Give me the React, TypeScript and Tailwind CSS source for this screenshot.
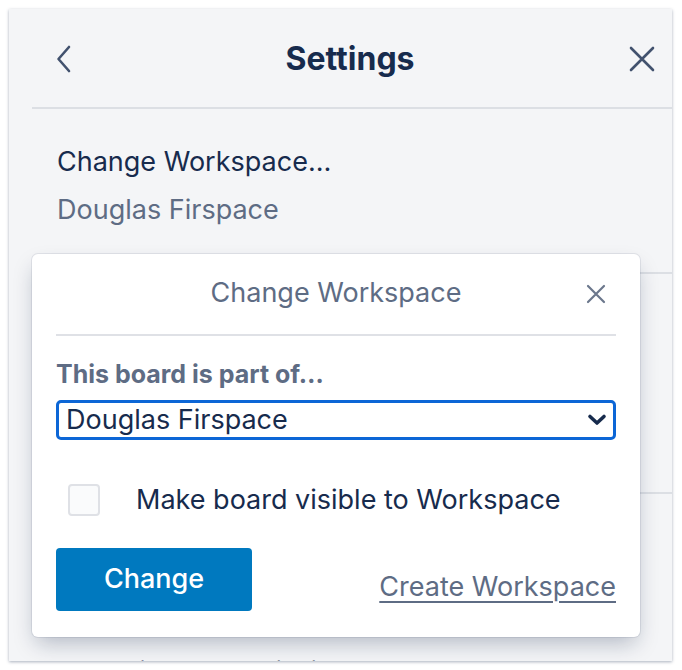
import { X } from 'lucide-react';

const font = { fontFamily: 'Inter, "Noto Sans", sans-serif' };

function SettingsPanel() {
  return (
    <div className="relative ml-[9px] mt-[9px] h-[652px] w-[663px] overflow-hidden bg-[#f4f5f7] shadow-[0_1px_3px_rgba(9,30,66,0.35)]">
      <div className="pl-[23px]">
        {/* Header */}
        <div className="flex h-[100px] items-center border-b-2 border-[#dcdfe4] pl-[24px] pr-[17px] pt-[2px] text-[#42526e]">
          <svg width="15" height="28" viewBox="0 0 15 28" fill="none">
            <path d="M13 2 L2.5 14 L13 26" stroke="currentColor" strokeWidth="2.6" strokeLinecap="round" strokeLinejoin="round" />
          </svg>
          <h1 className="flex-1 text-center text-[32px] font-bold leading-[40px] text-[#172b4d]">Settings</h1>
          <svg width="26" height="26" viewBox="0 0 26 26" fill="none">
            <path d="M2 2 L24 24 M24 2 L2 24" stroke="currentColor" strokeWidth="2.6" strokeLinecap="round" />
          </svg>
        </div>

        {/* Rows */}
        <div className="h-[163px] pl-[25px] pt-[37px]">
          <p className="text-[27px] leading-[32px] text-[#172b4d]">Change Workspace…</p>
          <p className="mt-[16px] text-[27px] leading-[32px] text-[#5e6c84]">Douglas Firspace</p>
        </div>
        <div className="h-[2px] bg-[#dcdfe4]" />
        <div className="h-[218px] pl-[25px] pt-[30px]">
          <p className="text-[27px] text-[#172b4d]">Change permissions…</p>
        </div>
        <div className="h-[2px] bg-[#dcdfe4]" />
        <div className="pl-[25px] pt-[30px]">
          <p className="text-[27px] leading-[32px] text-[#172b4d]">Cover images</p>
          <p className="mt-[100px] text-[27px] leading-[32px] text-[#172b4d]">Add sticker permissions</p>
        </div>
      </div>

      {/* Popover */}
      <div className="absolute left-[23px] top-[245px] w-[608px] rounded-[6px] bg-white px-[24px] pb-[26px] shadow-[0_10px_22px_-4px_rgba(9,30,66,0.28),0_0_0_1px_rgba(9,30,66,0.08)]">
        <div className="relative flex h-[82px] items-center justify-center border-b-2 border-[#dfe1e6] pb-[2px]">
          <span className="text-[27px] leading-[34px] text-[#5e6c84]">Change Workspace</span>
          <X className="hidden" />
          <svg width="20" height="20" viewBox="0 0 20 20" fill="none" className="absolute right-[10px] top-[30px] text-[#6b778c]">
            <path d="M2 2 L18 18 M18 2 L2 18" stroke="currentColor" strokeWidth="2.2" strokeLinecap="round" />
          </svg>
        </div>
        <p className="mt-[23px] text-[25px] font-bold leading-[30px] text-[#5e6c84]">This board is part of…</p>
        <div className="mt-[11px] flex h-[40px] items-center rounded-[5px] border-[3px] border-[#0c66d6] pl-[7px] pr-[6px]">
          <span className="flex-1 text-[27px] leading-[32px] text-[#172b4d]">Douglas Firspace</span>
          <svg width="20" height="14" viewBox="0 0 20 14" className="text-[#172b4d]">
            <path d="M3 3.5 L10 10 L17 3.5" fill="none" stroke="currentColor" strokeWidth="3.6" strokeLinecap="round" strokeLinejoin="round" />
          </svg>
        </div>
        <div className="mt-[43px] flex h-[34px] items-center">
          <div className="ml-[12px] h-[32px] w-[32px] rounded-[4px] border-2 border-[#dfe1e6] bg-[#fafbfc]" />
          <span className="ml-[36px] text-[27px] leading-[34px] text-[#172b4d]">Make board visible to Workspace</span>
        </div>
        <div className="mt-[31px] flex items-end justify-between">
          <button className="h-[63px] w-[196px] rounded-[4px] bg-[#0079bf] text-[27px] font-medium text-white">Change</button>
          <a className="mb-[9px] text-[27px] leading-[30px] text-[#5e6c84] underline decoration-[2px] underline-offset-[5px]">Create Workspace</a>
        </div>
      </div>
    </div>
  );
}

export default function App() {
  return (
    <div className="h-[670px] w-[682px] overflow-hidden bg-white" style={font}>
      <SettingsPanel />
    </div>
  );
}
